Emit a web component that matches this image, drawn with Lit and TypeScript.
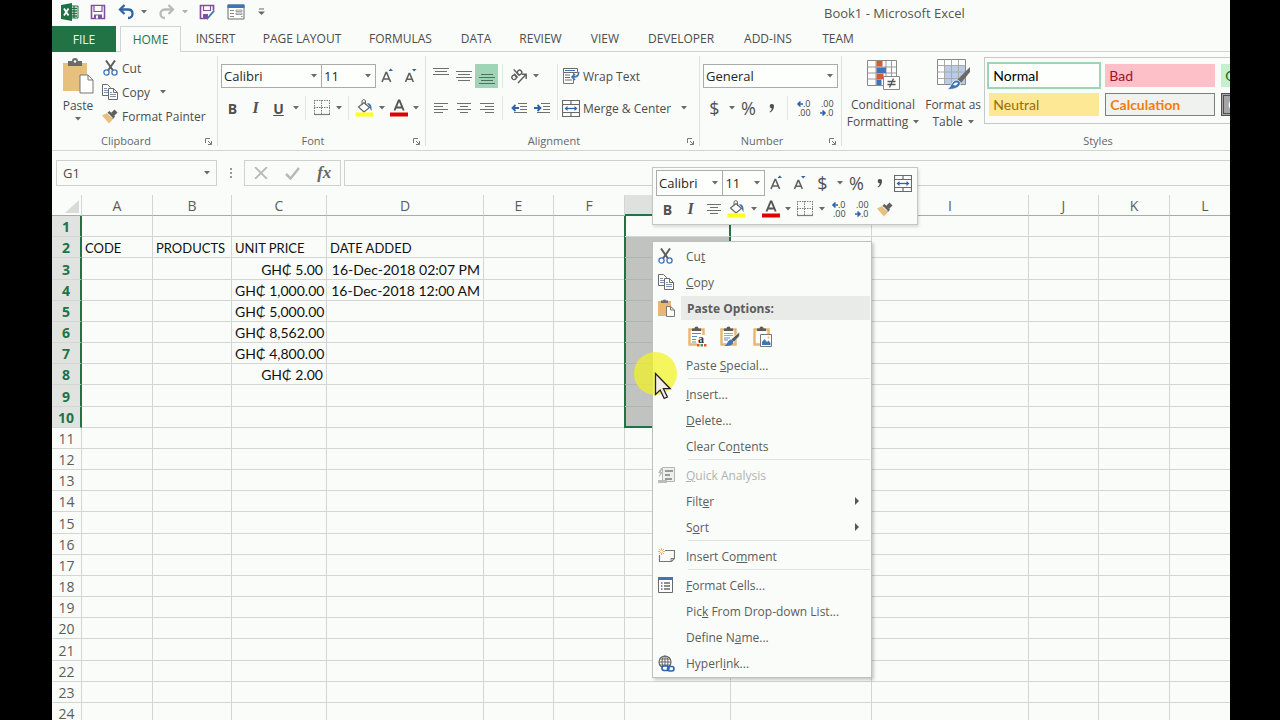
import { LitElement, html, css, nothing, TemplateResult } from "lit";
import { customElement } from "lit/decorators.js";
import { classMap } from "lit/directives/class-map.js";
import { styleMap } from "lit/directives/style-map.js";

const icons: Record<string, TemplateResult> = {
  excel: html`<svg width="18" height="18" viewBox="0 0 18 18"><path d="M9 3h8v12H9z" fill="#fff" stroke="#1e7145"/><path d="M10 5.500h6M10 8h6M10 10.500h6M10 13h6M13 3v12" stroke="#1e7145" stroke-width="1.300"/><path d="M0 2l11-2v18L0 16z" fill="#1e7145"/><path d="M3 5.500l4.500 7M7.500 5.500L3 12.500" stroke="#fff" stroke-width="1.800"/></svg>`,
  save: html`<svg width="16" height="16" viewBox="0 0 16 16"><path d="M1.500 1.500h13v13h-13z" fill="#fff" stroke="#8050a0" stroke-width="1.600"/><path d="M4 1.500h8v6H4z" fill="#fff" stroke="#8050a0" stroke-width="1.200"/><path d="M4 10.500h8v4H4z" fill="#8050a0"/><path d="M6 11.500h2v3H6z" fill="#fff"/></svg>`,
  undo: html`<svg width="18" height="16" viewBox="0 0 18 16" fill="none" stroke="#2f62a8" stroke-width="2.300"><path d="M3 5.500h8c3 0 4.500 2 4.500 4.200S14 14 11 14"/><path d="M7.500 1L3 5.500 7.500 10"/></svg>`,
  redo: html`<svg width="18" height="16" viewBox="0 0 18 16" fill="none" stroke="#b9b9b9" stroke-width="2.300"><path d="M15 5.500H7C4 5.500 2.500 7.500 2.500 9.700S4 14 7 14"/><path d="M10.500 1L15 5.500 10.500 10"/></svg>`,
  saveAs: html`<svg width="18" height="17" viewBox="0 0 18 17"><path d="M14.500 6V1.500h-13v13H9" fill="#fff" stroke="#8050a0" stroke-width="1.700"/><path d="M4.500 1.500v5h7v-5" fill="none" stroke="#8050a0" stroke-width="1.200"/><path d="M4 10h5v4H4z" fill="#8050a0"/><path d="M16 7l-6 7-2 2 .5-3 6-7z" fill="#3f74b5"/></svg>`,
  form: html`<svg width="18" height="16" viewBox="0 0 18 16"><path d="M1 1h16v14H1z" fill="#fff" stroke="#6a6a6a"/><path d="M.5.5h17v3.500H.5z" fill="#3f74b5"/><path d="M3 6.500h4M3 9.500h4M3 12.500h4M14 12.500h1.500" stroke="#8a8a8a"/><path d="M9 6h6v1.500H9zM9 9h6v1.500H9z" fill="none" stroke="#8a8a8a" stroke-width=".8"/></svg>`,
  customize: html`<svg width="7" height="8" viewBox="0 0 7 8"><path d="M1 1h5" stroke="#666"/><path d="M0 3.500h7L3.500 7z" fill="#666"/></svg>`,
  caret: html`<svg width="6" height="4" viewBox="0 0 6 4"><path d="M0 0h6L3 3.500z" fill="#6a6a6a"/></svg>`,
  pasteBig: html`<svg width="32" height="36" viewBox="0 0 32 36"><path d="M1 5h24v28H1z" fill="#e8c07d"/><path d="M6 3h4a3 3 0 0 1 6 0h4v5H6z" fill="#6a6a6a"/><circle cx="13" cy="3.500" r="1.300" fill="#fff"/><path d="M18 17h8l5 5v13H18z" fill="#fff" stroke="#777"/><path d="M26 17v5h5" fill="none" stroke="#777"/></svg>`,
  cut: html`<svg width="15" height="16" viewBox="0 0 15 16" fill="none"><path d="M3 .5l7 10M12 .5l-7 10" stroke="#5f5f5f" stroke-width="2"/><circle cx="3.500" cy="12.500" r="2.600" stroke="#3f74b5" stroke-width="1.300"/><circle cx="11.500" cy="12.500" r="2.600" stroke="#3f74b5" stroke-width="1.300"/></svg>`,
  copy: html`<svg width="16" height="16" viewBox="0 0 16 16" fill="#fff" stroke="#6a6a6a"><path d="M.5.5h5l3 3v8h-8z"/><path d="M2 4.500h3M2 6.500h5M2 8.500h5" stroke="#7d93b5"/><path d="M6.500 4.500h5l4 4v7h-9z"/><path d="M11.500 4.500v4h4" fill="none"/><path d="M8 8.500h2M8 10.500h6M8 12.500h6" stroke="#7d93b5"/></svg>`,
  brush: html`<svg width="16" height="15" viewBox="0 0 16 15"><path d="M0 6.500l5-2.500 6 6-4 4.500z" fill="#e8c07d"/><path d="M5.500 3.500l2-1.500 5.500 5.500-2 2.500z" fill="#5f5f5f"/><path d="M9 4l3.500-3.500 3 3L12 7z" fill="#5f5f5f"/><path d="M6.500 5l4 4" stroke="#fff" stroke-width=".8"/></svg>`,
  launcher: html`<svg width="7" height="7" viewBox="0 0 7 7" fill="none" stroke="#777"><path d="M.5 5V.5H5M3 3l3 3M6.500 3v3.500H3"/></svg>`,
  grow: html`<svg width="14" height="16" viewBox="0 0 14 16"><path d="M1 14l4-9.500h.6l4 9.500M2.500 11h5.700" stroke="#5f5f5f" stroke-width="1.600" fill="none"/><path d="M7.500 3L9.700.5 12 3z" fill="#2f62a8"/></svg>`,
  shrink: html`<svg width="14" height="16" viewBox="0 0 14 16"><path d="M1.500 14l3.600-8.500h.6L9.300 14M2.800 11.300h5.200" stroke="#5f5f5f" stroke-width="1.600" fill="none"/><path d="M8 1h4.500L10.200 3.500z" fill="#2f62a8"/></svg>`,
  borders: html`<svg width="16" height="16" viewBox="0 0 16 16"><path d="M0 .5h16M0 7.500h16M.5 0v15M7.500 0v15M15.500 0v15" stroke="#7a7a7a" stroke-dasharray="1.500 1"/><path d="M0 14.500h16" stroke="#7a7a7a" stroke-width="1.200"/></svg>`,
  fill: html`<svg width="19" height="18" viewBox="0 0 19 18"><path d="M9 3.500l5.500 5L9 13 3.500 8z" fill="#fff" stroke="#666" stroke-width="1.200"/><path d="M7 6V2a1.800 1.800 0 0 1 3.500 0v4" fill="none" stroke="#666"/><path d="M12 4c4 0 5 3 4.500 8-1.500-1-1-3-2-4.500z" fill="#3f74b5"/><path d="M.5 13.500h17.500v4H.5z" fill="#ffff1e"/></svg>`,
  fontColor: html`<svg width="18" height="18" viewBox="0 0 18 18"><path d="M4.500 11.500L8.700 1.500h.8l4.200 10M6 8.500h6.300" stroke="#555" stroke-width="1.900" fill="none"/><path d="M0 13.500h18v4H0z" fill="#e00000"/></svg>`,
  top: html`<svg width="16" height="16" viewBox="0 0 16 16" stroke="#6f6f6f"><path d="M0 .5h16M2 3.500h12M0 6.500h16"/></svg>`,
  middle: html`<svg width="16" height="16" viewBox="0 0 16 16" stroke="#6f6f6f"><path d="M0 3.500h16M2 6.500h12M0 9.500h16M2 12.500h12"/></svg>`,
  bottom: html`<svg width="16" height="16" viewBox="0 0 16 16" stroke="#4f6f5f"><path d="M2 6.500h12M0 9.500h16M2 12.500h12M0 15.500h16"/></svg>`,
  left: html`<svg width="14" height="11" viewBox="0 0 14 11" stroke="#6f6f6f"><path d="M0 .5h14M0 3.500h9M0 6.500h14M0 9.500h9"/></svg>`,
  center: html`<svg width="14" height="11" viewBox="0 0 14 11" stroke="#6f6f6f"><path d="M0 .5h14M3 3.500h8M0 6.500h14M3 9.500h8"/></svg>`,
  right: html`<svg width="14" height="11" viewBox="0 0 14 11" stroke="#6f6f6f"><path d="M0 .5h14M5 3.500h9M0 6.500h14M5 9.500h9"/></svg>`,
  orient: html`<svg width="18" height="16" viewBox="0 0 18 16" stroke="#5f5f5f" fill="none" stroke-width="1.400"><g transform="rotate(-42 6 7)"><circle cx="3" cy="7.500" r="2.200"/><path d="M5.500 4.800v5.200M8 1.500V10"/><circle cx="10.400" cy="7.500" r="2.200"/></g><path d="M8 15l7.500-8M16.200 11V6.300h-4.500"/></svg>`,
  outdent: html`<svg width="16" height="11" viewBox="0 0 16 11"><path d="M7 .5h9M9 3.500h7M9 6.500h7M3 9.500h13" stroke="#6f6f6f"/><path d="M8 5H2M4.500 2L1.500 5l3 3" stroke="#2f62a8" stroke-width="1.800" fill="none"/></svg>`,
  indent: html`<svg width="16" height="11" viewBox="0 0 16 11"><path d="M7 .5h9M9 3.500h7M9 6.500h7M3 9.500h13" stroke="#6f6f6f"/><path d="M0 5h6M3.500 2l3 3-3 3" stroke="#2f62a8" stroke-width="1.800" fill="none"/></svg>`,
  wrap: html`<svg width="18" height="16" viewBox="0 0 18 16"><path d="M1.500.5h10v15h-10z" fill="#fff" stroke="#777"/><path d="M3 7h5M3 9.500h5M3 12h7" stroke="#6a6a6a"/><path d="M1.500.5h14v4h-14z" fill="#fff" stroke="#6a6a6a"/><path d="M3 2.500h10" stroke="#3f74b5"/><path d="M16.500 4c.5 3-1 5-5 5M13 6L10 9l3 3" stroke="#3f74b5" stroke-width="1.700" fill="none"/></svg>`,
  merge: html`<svg width="18" height="17" viewBox="0 0 18 17"><path d="M.5.5h17v16H.5zM.5 4.500h17M.5 12.500h17M9 .5v4M9 12.500v4" fill="#fff" stroke="#6a6a6a" stroke-width="1.200"/><path d="M4 8.500h10" stroke="#2f62a8" stroke-width="1.300"/><path d="M5.500 6L2.500 8.500l3 2.500zM12.500 6l3 2.500-3 2.500z" fill="#2f62a8"/></svg>`,
  comma: html`<svg width="6" height="9" viewBox="0 0 6 9"><path d="M3 0a2 2 0 0 1 2 2.200C5 5 3.500 7.500 1 8.500l-.4-.8C2 7 2.700 5.500 2.700 4.300A2 2 0 0 1 3 0z" fill="#505050"/></svg>`,
  incDec: html`<svg width="18" height="20" viewBox="0 0 18 20"><path d="M8 6H3M5.500 3.500L3 6l2.500 2.500" stroke="#2f62a8" stroke-width="1.600" fill="none"/><text x="8" y="9" font-family="Open Sans, sans-serif" font-size="9" fill="#444">.0</text><text x="3" y="18" font-family="Open Sans, sans-serif" font-size="9" fill="#444">.00</text></svg>`,
  decDec: html`<svg width="18" height="20" viewBox="0 0 18 20"><path d="M2 15h5M4.500 12.500L7 15l-2.500 2.500" stroke="#2f62a8" stroke-width="1.600" fill="none"/><text x="3" y="9" font-family="Open Sans, sans-serif" font-size="9" fill="#444">.00</text><text x="8" y="18" font-family="Open Sans, sans-serif" font-size="9" fill="#444">.0</text></svg>`,
  conditional: html`<svg width="34" height="34" viewBox="0 0 34 34"><path d="M1.500 2.500h29v25h-29z" fill="#fff" stroke="#888"/><path d="M10 2.500v25M20 2.500v25M25.500 2.500v25M1.500 9h29M1.500 15h29M1.500 21h29" stroke="#999" fill="none"/><path d="M10.500 3h6v5.500h-6zM10.500 15.500h7v5.500h-7z" fill="#d55b33"/><path d="M10.500 9.500h9.500V15h-9.500zM10.500 21.500h5V27h-5z" fill="#3f74b5"/><path d="M17.500 18.500h16v13h-16z" fill="#fff" stroke="#888"/><path d="M21.500 23.500h8M21.500 26.500h8M27.500 20.500l-4 9" stroke="#555" stroke-width="1.300"/></svg>`,
  formatTable: html`<svg width="34" height="34" viewBox="0 0 34 34"><path d="M1.500 1.500h28v25h-28z" fill="#fff" stroke="#888"/><path d="M9 8h20v18H9z" fill="#b9cbe6"/><path d="M8.500 1.500v25M15.500 1.500v25M22.500 1.500v25M1.500 7.500h28M1.500 14h28M1.500 20.500h28" stroke="#aaa" fill="none"/><path d="M34 9v5l-9 11-4-3z" fill="#6a6a6a"/><path d="M20 22c4 0 5 3 4 5-3 4-8 4.500-13 4.500 4-2 4-8 9-9.500z" fill="#3f74b5" stroke="#fff" stroke-width=".8"/><path d="M17 27c1-2 3-3 5-2-1 2-2 3-5 2z" fill="#fff"/></svg>`,
  cancel: html`<svg width="14" height="12" viewBox="0 0 14 12"><path d="M1 0l12 12M13 0L1 12" stroke="#b9b9b9" stroke-width="1.800"/></svg>`,
  check: html`<svg width="15" height="13" viewBox="0 0 15 13"><path d="M1 7l4.500 4.500L14 1" stroke="#b9b9b9" stroke-width="2.500" fill="none"/></svg>`,
  dots: html`<svg width="2" height="10" viewBox="0 0 2 10" fill="#999"><path d="M0 0h2v2H0zM0 4h2v2H0zM0 8h2v2H0z"/></svg>`,
  corner: html`<svg width="14" height="13" viewBox="0 0 14 13"><path d="M14 0v13H0z" fill="#dadada"/></svg>`,
  paste: html`<svg width="17" height="18" viewBox="0 0 17 18"><path d="M0 2h13v15H0z" fill="#e8b871"/><path d="M3 1.500h2a1.600 1.600 0 0 1 3 0h2V4H3z" fill="#6a6a6a"/><path d="M8.500 7.500h4l4 3.500v6.500h-8z" fill="#fff" stroke="#777"/><path d="M12.500 7.500V11h4" fill="none" stroke="#777"/></svg>`,
  pasteText: html`<svg width="19" height="21" viewBox="0 0 19 21"><path d="M1.500 3.500h14v15h-14z" fill="#fff" stroke="#e8b871" stroke-width="2.500"/><path d="M4 2.500h2.500a2 2 0 0 1 4 0H13V5H4z" fill="#5a5a5a"/><path d="M4 7.500h9M4 10.500h9M4 13.500h4M4 16h4" stroke="#5f88bf"/><path d="M9 9h10v12H9z" fill="#fff"/><text x="10" y="16.500" font-family="Liberation Serif, serif" font-size="12" font-weight="700" fill="#333">a</text><path d="M9 18h2.500v2.500H9z" fill="#d55b33"/><path d="M12.500 18H15v2.500h-2.500z" fill="#3a9b5c"/><path d="M16 18h2.500v2.500H16z" fill="#d55b33"/></svg>`,
  pasteFormat: html`<svg width="20" height="21" viewBox="0 0 20 21"><path d="M1.500 3.500h14v15h-14z" fill="#fff" stroke="#e8b871" stroke-width="2.500"/><path d="M4 2.500h2.500a2 2 0 0 1 4 0H13V5H4z" fill="#5a5a5a"/><path d="M4 7.500h9M4 9.500h9" stroke="#c99"/><path d="M4 12h6M4 14h4" stroke="#5f88bf"/><path d="M19.500 6v4l-5.500 6-3-2.500z" fill="#5a5a5a" stroke="#fff" stroke-width=".6"/><path d="M10.500 13.500c3 0 3.500 3 2 4.500-2 2-5 2-8 2 3-1.500 2.500-5 6-6.500z" fill="#3f74b5"/></svg>`,
  pastePicture: html`<svg width="19" height="21" viewBox="0 0 19 21"><path d="M1.500 3.500h14v15h-14z" fill="#fff" stroke="#e8b871" stroke-width="2.500"/><path d="M4 2.500h2.500a2 2 0 0 1 4 0H13V5H4z" fill="#5a5a5a"/><path d="M7.500 8.500h11v12h-11z" fill="#fff" stroke="#777"/><path d="M9 19v-3l2.500-3 2.500 3 1.500-1.500L17.500 17v2z" fill="#3f74b5"/><circle cx="15.500" cy="11.500" r="1" fill="#e8b871"/></svg>`,
  analysis: html`<svg width="17" height="17" viewBox="0 0 17 17"><path d="M4.500.5h12v14h-12z" fill="#eee" stroke="#b5b5b5"/><path d="M7 3h8v2H7zM7 7h5v2H7zM7 11h7v2H7z" fill="#999"/><path d="M3 1L0 6h2l-1.500 5L5 5H3l2-4zM0 13h9v3H0z" fill="#bcbcbc"/></svg>`,
  comment: html`<svg width="17" height="16" viewBox="0 0 17 16"><path d="M7 2.500h9.500v8l-3 3H1.500V7" fill="none" stroke="#777" stroke-width="1.200"/><path d="M16 10.500h-3v3" fill="none" stroke="#777"/><path d="M3.500 0v7M0 3.500h7M1 1l5 5M6 1L1 6" stroke="#e0a94e" stroke-width=".9"/><circle cx="3.500" cy="3.500" r="1.300" fill="#fff"/></svg>`,
  cells: html`<svg width="15" height="16" viewBox="0 0 15 16"><path d="M.5.5h14v15H.5z" fill="#fff" stroke="#6a6a6a"/><path d="M0 0h15v3H0z" fill="#3f74b5"/><path d="M3 6h1.500M3 9h1.500M3 12h1.500M6 6h6M6 9h6M6 12h6" stroke="#6a6a6a" stroke-width="1.300"/></svg>`,
  link: html`<svg width="17" height="17" viewBox="0 0 17 17" fill="none"><circle cx="7" cy="7" r="6" stroke="#666" stroke-width="1.200"/><path d="M1 7h12M7 1v12M2.200 4h9.600M2.200 10h9.600" stroke="#666"/><ellipse cx="7" cy="7" rx="3" ry="6" stroke="#666"/><rect x="4" y="11" width="7" height="4.500" rx="2.200" fill="#fff" stroke="#2f62a8" stroke-width="1.600"/><rect x="9.500" y="11.500" width="6.500" height="4.500" rx="2.200" stroke="#2f62a8" stroke-width="1.600"/></svg>`,
  arrow: html`<svg width="4" height="8" viewBox="0 0 4 8"><path d="M0 0l4 4-4 4z" fill="#555"/></svg>`,
  pointer: html`<svg width="18" height="28" viewBox="0 0 18 28"><path d="M1.500 1.500v21l4.700-4.500 4 8.500 3.200-1.500-4-8.300h6.800z" fill="#f4ece8" stroke="#222" stroke-width="1.300"/></svg>`,
};

const base = css`
  * { box-sizing: border-box; }
  svg { display: block; flex: none; }
  button, input, select { font: inherit; color: inherit; margin: 0; padding: 0; border: 0; background: none; border-radius: 0; outline: 0; }
  button { display: flex; align-items: center; justify-content: center; white-space: nowrap; }
  .tool { width: 23px; height: 24px; flex: none; font-size: 15px; color: #505050; }
  .bold { font-weight: 700; font-size: 14px; }
  .italic { font: italic 700 16px "Liberation Serif", serif; }
  .underline { font-weight: 700; font-size: 14px; text-decoration: underline; }
  .glyph { font-size: 18px; }
  .drop { width: 11px; height: 24px; flex: none; }
  .on { background: #9fd5b7; }
  .row { display: flex; align-items: center; }
  .combo { position: relative; display: flex; align-items: center; border: 1px solid #ababab; background: #fdfffc; color: #262626; height: 24px; }
  .combo select { appearance: none; width: 100%; height: 100%; padding: 0 2px; font-size: 13px; }
  .combo svg { position: absolute; right: 4px; pointer-events: none; }
  .combo + .combo { border-left: 0; }
`;

const tool = (icon: string, label: string, on = false) =>
  html`<button class=${classMap({ tool: true, on })} aria-label=${label}>${icons[icon]}</button>`;
const drop = (label: string) => html`<button class="drop" aria-label=${label}>${icons.caret}</button>`;
const combo = (cls: string, label: string, value: string) =>
  html`<div class="combo ${cls}"><select aria-label=${label}><option>${value}</option></select>${icons.caret}</div>`;

@customElement("excel-ribbon")
class ExcelRibbon extends LitElement {
  static styles = [base, css`
    :host { display: flex; height: 99px; border-bottom: 1px solid #d2d4d2; overflow: hidden; }
    .group { display: flex; flex-direction: column; flex: none; position: relative; }
    .group::after { content: ""; position: absolute; right: 0; top: 4px; bottom: 4px; width: 1px; background: #dfe1df; }
    .body { flex: 1; display: flex; }
    .label { height: 19px; line-height: 20px; font-size: 11px; text-align: center; color: #666; }
    .launch { position: absolute; right: 5px; bottom: 4px; width: 9px; height: 9px; }
    .clipboard { width: 166px; }
    .clipboard .label, .font .label, .align .label, .number .label { padding-right: 18px; }
    .clipboard .body { padding: 4px 0 0 8px; gap: 6px; }
    .font { width: 208px; }
    .align { width: 274px; }
    .number { width: 142px; }
    .styles { width: 512px; }
    .rows { display: flex; flex-direction: column; align-items: flex-start; gap: 8px; padding: 12px 0 0 3px; }
    .wraps { padding-left: 0; }
    .big { flex-direction: column; justify-content: flex-start; font-size: 12px; line-height: 17px; gap: 4px; }
    .paste { width: 36px; padding-top: 2px; gap: 3px; }
    .line { display: flex; align-items: center; justify-content: center; gap: 5px; }
    .list button { height: 24px; justify-content: flex-start; gap: 4px; font-size: 12px; }
    .list .slot { display: flex; width: 16px; justify-content: center; }
    .list .more { margin-left: 6px; }
    .sep { width: 1px; height: 24px; margin: 0 4px; background: #e2e4e2; flex: none; }
    .tall { height: 56px; margin-top: 12px; }
    .name { width: 101px; }
    .size { width: 54px; }
    .format { width: 135px; }
    .text { height: 24px; gap: 3px; font-size: 12px; }
    .text .more { margin-left: 7px; }
    .cond { width: 72px; margin-left: 5px; padding-top: 6px; }
    .table { width: 62px; margin-left: 4px; padding-top: 6px; }
    .gallery { margin: 5px 0 0 1px; width: 380px; height: 67px; border: 1px solid #c3cbc6; display: grid; grid-template-columns: repeat(3, 110px); grid-auto-rows: 23px; gap: 6px; padding: 6px 4px; }
    .gallery button { justify-content: flex-start; padding-left: 4px; font: 14px Lato, sans-serif; }
    .gallery .normal { color: #000; outline: 2px solid #9fd5b7; background: #fdfffc; }
    .gallery .bad { background: #fdc0c8; color: #a0122a; }
    .gallery .good { background: #c6efce; color: #0a6a14; }
    .gallery .neutral { background: #fde896; color: #9c6a08; }
    .gallery .calc { background: #f0f2ef; color: #f07d0c; font-weight: 700; border: 1px solid #7f7f7f; }
    .gallery .checkcell { background: #a5a5a5; color: #fff; font-weight: 700; border: 3px double #4f4f4f; }
  `];

  render() {
    return html`
      <section class="group clipboard">
        <div class="body">
          <button class="big paste">${icons.pasteBig}<span>Paste</span>${icons.caret}</button>
          <div class="list">
            <button><span class="slot">${icons.cut}</span>Cut</button>
            <button><span class="slot">${icons.copy}</span>Copy<span class="more">${icons.caret}</span></button>
            <button><span class="slot">${icons.brush}</span>Format Painter</button>
          </div>
        </div>
        <div class="label">Clipboard</div>
        <button class="launch" aria-label="Clipboard settings">${icons.launcher}</button>
      </section>
      <section class="group font">
        <div class="body">
          <div class="rows">
            <div class="row">${combo("name", "Font", "Calibri")}${combo("size", "Font size", "11")}${tool("grow", "Grow font")}${tool("shrink", "Shrink font")}</div>
            <div class="row">
              <button class="tool bold">B</button><button class="tool italic">I</button><button class="tool underline">U</button>${drop("Underline styles")}
              <span class="sep"></span>${tool("borders", "Borders")}${drop("Border styles")}
              <span class="sep"></span>${tool("fill", "Fill colour")}${drop("Fill colours")}${tool("fontColor", "Font colour")}${drop("Font colours")}
            </div>
          </div>
        </div>
        <div class="label">Font</div>
        <button class="launch" aria-label="Font settings">${icons.launcher}</button>
      </section>
      <section class="group align">
        <div class="body">
          <div class="rows">
            <div class="row">${tool("top", "Top align")}${tool("middle", "Middle align")}${tool("bottom", "Bottom align", true)}<span class="sep"></span>${tool("orient", "Orientation")}${drop("Orientations")}</div>
            <div class="row">${tool("left", "Align left")}${tool("center", "Centre")}${tool("right", "Align right")}<span class="sep"></span>${tool("outdent", "Decrease indent")}${tool("indent", "Increase indent")}</div>
          </div>
          <span class="sep tall"></span>
          <div class="rows wraps">
            <button class="text">${icons.wrap}Wrap Text</button>
            <button class="text">${icons.merge}Merge &amp; Center<span class="more">${icons.caret}</span></button>
          </div>
        </div>
        <div class="label">Alignment</div>
        <button class="launch" aria-label="Alignment settings">${icons.launcher}</button>
      </section>
      <section class="group number">
        <div class="body">
          <div class="rows">
            <div class="row">${combo("format", "Number format", "General")}</div>
            <div class="row">
              <button class="tool glyph">$</button>${drop("Currencies")}<button class="tool glyph">%</button>${tool("comma", "Comma style")}
              <span class="sep"></span>${tool("incDec", "Increase decimal")}${tool("decDec", "Decrease decimal")}
            </div>
          </div>
        </div>
        <div class="label">Number</div>
        <button class="launch" aria-label="Number settings">${icons.launcher}</button>
      </section>
      <section class="group styles">
        <div class="body">
          <button class="big cond">${icons.conditional}<span>Conditional<span class="line">Formatting ${icons.caret}</span></span></button>
          <button class="big table">${icons.formatTable}<span>Format as<span class="line">Table ${icons.caret}</span></span></button>
          <div class="gallery">
            <button class="normal">Normal</button><button class="bad">Bad</button><button class="good">Good</button>
            <button class="neutral">Neutral</button><button class="calc">Calculation</button><button class="checkcell">Check Cell</button>
          </div>
        </div>
        <div class="label">Styles</div>
      </section>`;
  }
}

@customElement("work-sheet")
class WorkSheet extends LitElement {
  static styles = [base, css`
    :host { display: block; overflow: hidden; }
    table { border-collapse: separate; border-spacing: 0; table-layout: fixed; width: 0; font: 14px Lato, sans-serif; color: #111; }
    tr { height: 21px; }
    tbody tr:nth-child(6n + 3) { height: 22px; }
    th, td { padding: 2px 3px 0; border: 0 solid #d4d6d3; border-right-width: 1px; border-bottom-width: 1px; white-space: nowrap; overflow: hidden; line-height: 18px; text-align: left; }
    th { font: 14px/18px "Open Sans", sans-serif; color: #5c5c5c; text-align: center; }
    thead th { border-bottom-color: #a9aba9; }
    thead .sel { background: #dfe1de; border-bottom: 2px solid #217346; padding-top: 1px; }
    tbody .sel { background: #e1e3e0; color: #217346; font-weight: 700; border-right: 2px solid #217346; }
    td { font-size: 13px; }
    .num { text-align: right; font-size: 14px; }
    .corner svg { margin-left: 10px; }
    .range { --g: #217346; box-shadow: -1px 0 var(--g), inset 1px 0 var(--g), inset -1px 0 var(--g); border-right-color: #217346; }
    .shade { background: #c1c3c0; border-bottom-color: #b3b5b2; }
    .last { border-bottom: 2px solid #217346; }
  `];

  columns: [string, number][] = [["A", 71], ["B", 79], ["C", 95], ["D", 157], ["E", 70], ["F", 71], ["G", 106], ["H", 141], ["I", 157], ["J", 70], ["K", 71], ["L", 71]];
  values: Record<string, string> = {
    A2: "CODE", B2: "PRODUCTS", C2: "UNIT PRICE", D2: "DATE ADDED",
    C3: "GH₵ 5.00", C4: "GH₵ 1,000.00", C5: "GH₵ 5,000.00", C6: "GH₵ 8,562.00", C7: "GH₵ 4,800.00", C8: "GH₵ 2.00",
    D3: "16-Dec-2018 02:07 PM", D4: "16-Dec-2018 12:00 AM",
  };

  render() {
    const rows = Array.from({ length: 24 }, (_, i) => i + 1);
    return html`<table>
      <colgroup><col style="width:30px">${this.columns.map(([, w]) => html`<col style=${styleMap({ width: w + "px" })}>`)}</colgroup>
      <thead><tr><th class="corner">${icons.corner}</th>${this.columns.map(([c]) => html`<th class=${c === "G" ? "sel" : ""}>${c}</th>`)}</tr></thead>
      <tbody>${rows.map((r) => html`<tr><th class=${r <= 10 ? "sel" : ""}>${r}</th>${this.columns.map(([c]) => {
        const inRange = c === "G" && r <= 10;
        return html`<td class=${classMap({ num: r > 2, range: inRange, shade: inRange && r > 1, last: inRange && r === 10 })}>${this.values[c + r] ?? nothing}</td>`;
      })}</tr>`)}</tbody>
    </table>`;
  }
}

@customElement("mini-toolbar")
class MiniToolbar extends LitElement {
  static styles = [base, css`
    :host { display: flex; flex-direction: column; gap: 1px; width: 266px; padding: 2px 3px 3px; border: 1px solid #c4c6c4; background: #fafcf9; box-shadow: 1px 2px 3px #0002; }
    .combo { height: 26px; }
    .name { width: 68px; }
    .size { width: 42px; }
  `];
  render() {
    return html`
      <div class="row">${combo("name", "Font", "Calibri")}${combo("size", "Font size", "11")}${tool("grow", "Grow font")}${tool("shrink", "Shrink font")}
        <button class="tool glyph">$</button>${drop("Currencies")}<button class="tool glyph">%</button>${tool("comma", "Comma style")}${tool("merge", "Merge and centre")}</div>
      <div class="row"><button class="tool bold">B</button><button class="tool italic">I</button>${tool("center", "Centre")}
        ${tool("fill", "Fill colour")}${drop("Fill colours")}${tool("fontColor", "Font colour")}${drop("Font colours")}${tool("borders", "Borders")}${drop("Border styles")}
        ${tool("incDec", "Increase decimal")}${tool("decDec", "Decrease decimal")}${tool("brush", "Format painter")}</div>`;
  }
}

type Entry = { text?: [string, string, string]; icon?: string; more?: boolean; off?: boolean; kind?: "sep" | "head" | "paste" };

@customElement("context-menu")
class ContextMenu extends LitElement {
  static styles = [base, css`
    :host { display: flex; flex-direction: column; width: 220px; padding: 1px; border: 1px solid #bfc1bf; background: #fafcf9; box-shadow: 2px 2px 3px #0003; font-size: 12px; color: #5c5c5c; }
    .item, .head { display: flex; align-items: center; justify-content: flex-start; width: 100%; height: 26px; }
    .gutter { width: 32px; padding-left: 4px; flex: none; }
    .text { flex: 1; text-align: left; }
    .off { color: #b3b3b3; }
    .more { margin-right: 11px; }
    .sep { height: 1px; margin: 0 0 2px 34px; background: #e0e2df; }
    .title { flex: 1; height: 24px; margin-left: -5px; padding-left: 6px; line-height: 25px; background: #e9ebe8; font-weight: 700; }
    .options { display: flex; align-items: center; gap: 13px; height: 31px; padding-left: 34px; }
  `];
  entries: Entry[] = [
    { text: ["Cu", "t", ""], icon: "cut" }, { text: ["", "C", "opy"], icon: "copy" },
    { kind: "head" }, { kind: "paste" },
    { text: ["Paste ", "S", "pecial..."] }, { kind: "sep" },
    { text: ["", "I", "nsert..."] }, { text: ["", "D", "elete..."] }, { text: ["Clear Co", "n", "tents"] }, { kind: "sep" },
    { text: ["", "Q", "uick Analysis"], icon: "analysis", off: true }, { text: ["Filt", "e", "r"], more: true }, { text: ["S", "o", "rt"], more: true }, { kind: "sep" },
    { text: ["Insert Co", "m", "ment"], icon: "comment" }, { kind: "sep" },
    { text: ["", "F", "ormat Cells..."], icon: "cells" }, { text: ["Pic", "k", " From Drop-down List..."] },
    { text: ["Define N", "a", "me..."] }, { text: ["Hyperl", "i", "nk..."], icon: "link" },
  ];
  row(e: Entry) {
    if (e.kind === "sep") return html`<div class="sep"></div>`;
    if (e.kind === "head") return html`<div class="head"><span class="gutter">${icons.paste}</span><span class="title">Paste Options:</span></div>`;
    if (e.kind === "paste") return html`<div class="options">
      <button aria-label="Keep source">${icons.pasteText}</button><button aria-label="Formatting">${icons.pasteFormat}</button><button aria-label="Picture">${icons.pastePicture}</button></div>`;
    const [a, b, c] = e.text!;
    return html`<button class=${classMap({ item: true, off: !!e.off })}><span class="gutter">${e.icon ? icons[e.icon] : nothing}</span><span class="text">${a}<u>${b}</u>${c}</span>${e.more ? html`<span class="more">${icons.arrow}</span>` : nothing}</button>`;
  }
  render() {
    return this.entries.map((e) => this.row(e));
  }
}

@customElement("app-root")
class AppRoot extends LitElement {
  static styles = [base, css`
    :host { display: block; box-sizing: border-box; height: 100vh; overflow: hidden; background: #000; padding: 0 50px 0 52px; font: 12px "Open Sans", sans-serif; color: #4c4c4c; }
    .window { position: relative; height: 100%; overflow: hidden; background: #fafcf9; }
    .bar { display: flex; align-items: center; height: 26px; padding: 0 0 2px 4px; }
    .quick { width: 28px; height: 24px; flex: none; }
    .small { width: 8px; height: 24px; margin-right: 5px; flex: none; }
    .faded { opacity: .5; }
    .title { margin-left: 552px; font-size: 13px; line-height: 26px; color: #555; white-space: nowrap; padding-top: 2px; }
    .custom { width: 22px; }
    .tabs { display: flex; height: 26px; border-bottom: 1px solid #d2d4d2; }
    .tab { flex: none; height: 25px; font-size: 12px; }
    .file { width: 64px; height: 26px; margin-right: 4px; background: #217346; color: #eef5f0; }
    .home { height: 26px; border: 1px solid #d2d4d2; border-bottom: 0; background: #fafcf9; color: #217346; }
    .formula { display: flex; height: 44px; padding: 9px 0 9px 4px; }
    .box { display: flex; align-items: center; border: 1px solid #cfd1cf; }
    .namebox { width: 161px; padding: 0 6px; }
    .namebox input { flex: 1; min-width: 0; font-size: 13px; }
    .dots { width: 27px; display: flex; align-items: center; justify-content: center; }
    .actions { width: 97px; justify-content: space-around; margin-right: 3px; }
    .actions .fx { font: italic 700 17px "Liberation Serif", serif; color: #666; }
    .formula .entry { flex: 1; min-width: 0; border: 1px solid #cfd1cf; border-right: 0; padding: 0 6px; }
    mini-toolbar { position: absolute; left: 600px; top: 167px; }
    context-menu { position: absolute; left: 600px; top: 241px; }
    .spot { position: absolute; left: 582px; top: 352px; width: 43px; height: 43px; border-radius: 50%; background: #f2f221; opacity: .72; }
    .pointer { position: absolute; left: 602px; top: 372px; }
  `];

  tabs: [string, number][] = [["HOME", 61], ["INSERT", 69], ["PAGE LAYOUT", 104], ["FORMULAS", 93], ["DATA", 58], ["REVIEW", 71], ["VIEW", 58], ["DEVELOPER", 94], ["ADD-INS", 80], ["TEAM", 60]];

  quick(icon: string, label: string) {
    return html`<button class="quick" aria-label=${label}>${icons[icon]}</button>`;
  }

  render() {
    return html`<div class="window">
      <header class="bar">
        ${this.quick("excel", "Excel")}${this.quick("save", "Save")}${this.quick("undo", "Undo")}<button class="small" aria-label="Undo list">${icons.caret}</button>
        ${this.quick("redo", "Redo")}<button class="small faded" aria-label="Redo list">${icons.caret}</button>
        ${this.quick("saveAs", "Save as")}${this.quick("form", "Form")}<button class="quick custom" aria-label="Customize toolbar">${icons.customize}</button>
        <span class="title">Book1 - Microsoft Excel</span>
      </header>
      <nav class="tabs"><button class="tab file">FILE</button>${this.tabs.map(([t, w]) => html`<button class="tab ${t === "HOME" ? "home" : ""}" style=${styleMap({ width: w + "px" })}>${t}</button>`)}</nav>
      <excel-ribbon></excel-ribbon>
      <div class="formula">
        <div class="box namebox"><input aria-label="Name box" value="G1">${icons.caret}</div>
        <div class="dots">${icons.dots}</div>
        <div class="box actions"><button aria-label="Cancel">${icons.cancel}</button><button aria-label="Enter">${icons.check}</button><button class="fx">fx</button></div>
        <input class="entry" aria-label="Formula">
      </div>
      <work-sheet></work-sheet>
      <mini-toolbar></mini-toolbar>
      <context-menu></context-menu>
      <div class="spot"></div>
      <div class="pointer">${icons.pointer}</div>
    </div>`;
  }
}
